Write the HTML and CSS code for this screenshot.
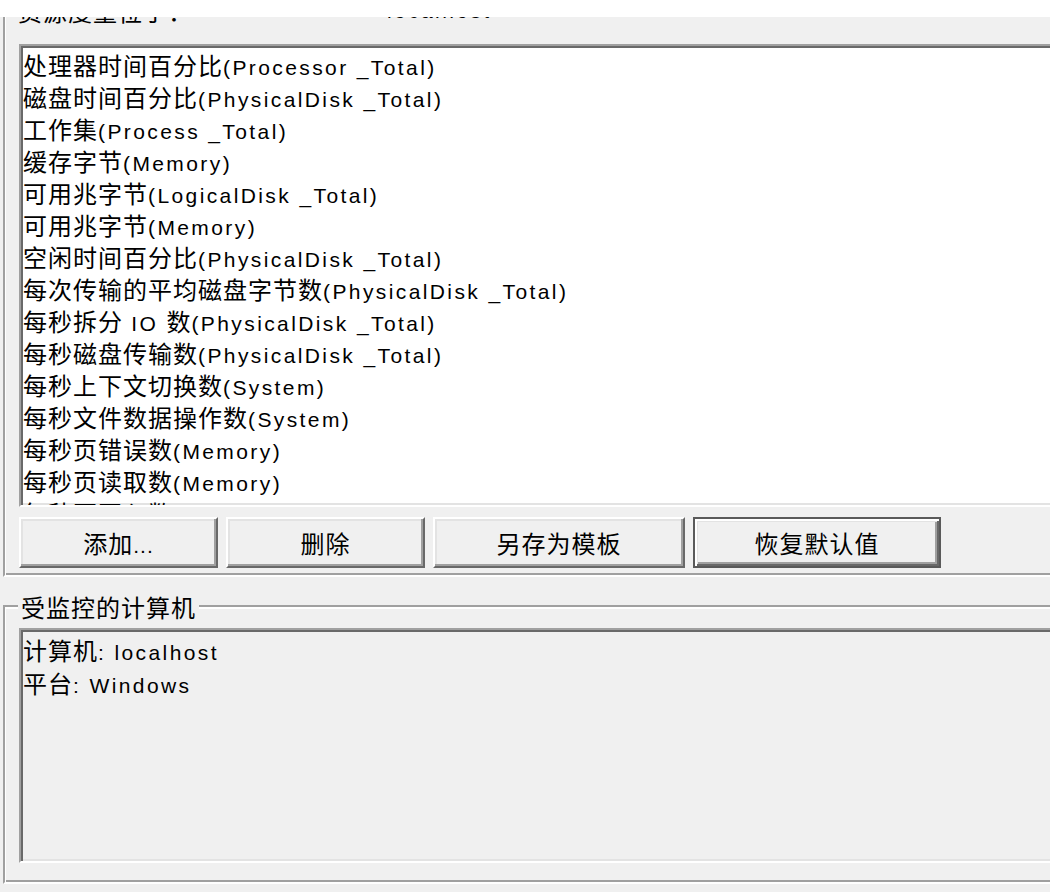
FILE: index.html
```html
<!DOCTYPE html>
<html lang="zh-CN">
<head>
<meta charset="utf-8">
<title>数据收集器属性</title>
<link rel="stylesheet" href="styles.css">
</head>
<body>
<div class="topband"></div>

<section class="group group-upper">
  <div class="src-row">
    <span class="src-label">资源度量位于：</span>
    <span class="src-value en">localhost</span>
  </div>
  <ul class="listbox">
    <li>处理器时间百分比<span class="en">(Processor _Total)</span></li>
    <li>磁盘时间百分比<span class="en">(PhysicalDisk _Total)</span></li>
    <li>工作集<span class="en">(Process _Total)</span></li>
    <li>缓存字节<span class="en">(Memory)</span></li>
    <li>可用兆字节<span class="en">(LogicalDisk _Total)</span></li>
    <li>可用兆字节<span class="en">(Memory)</span></li>
    <li>空闲时间百分比<span class="en">(PhysicalDisk _Total)</span></li>
    <li>每次传输的平均磁盘字节数<span class="en">(PhysicalDisk _Total)</span></li>
    <li>每秒拆分<span class="en"> IO </span>数<span class="en">(PhysicalDisk _Total)</span></li>
    <li>每秒磁盘传输数<span class="en">(PhysicalDisk _Total)</span></li>
    <li>每秒上下文切换数<span class="en">(System)</span></li>
    <li>每秒文件数据操作数<span class="en">(System)</span></li>
    <li>每秒页错误数<span class="en">(Memory)</span></li>
    <li>每秒页读取数<span class="en">(Memory)</span></li>
    <li>每秒页写入数<span class="en">(Memory)</span></li>
  </ul>
  <div class="buttons">
    <button class="btn btn-add">添加<span class="en">...</span></button>
    <button class="btn btn-del">删除</button>
    <button class="btn btn-save">另存为模板</button>
    <button class="btn btn-reset btn-default">恢复默认值</button>
  </div>
</section>

<section class="group group-lower">
  <div class="legend">受监控的计算机</div>
  <div class="infobox">
    <div class="info-line">计算机<span class="en">: localhost</span></div>
    <div class="info-line">平台<span class="en">: Windows</span></div>
  </div>
</section>
</body>
</html>
```
FILE: styles.css
```css
html, body {
  margin: 0;
  padding: 0;
}

body {
  width: 1050px;
  height: 892px;
  overflow: hidden;
  background: #f0f0f0;
  color: #000;
  font-family: "Noto Sans CJK SC", "Liberation Sans", sans-serif;
  font-size: 24px;
  letter-spacing: 1px;
}

.en {
  font-family: "Liberation Sans", "Noto Sans CJK SC", sans-serif;
  font-size: 21px;
  letter-spacing: 2.4px;
}

.topband {
  height: 17px;
  background: #fff;
}

.group {
  margin-left: 3px;
  border-left: 2px solid #a0a0a0;
  border-bottom: 2px solid #fff;
}

.group-upper {
  position: relative;
  overflow: hidden;
  padding: 0 0 7px 14px;
  box-shadow: inset 1px 0 0 #fff, inset 0 -2px 0 #a0a0a0;
}

.src-row {
  display: flex;
  height: 22px;
  line-height: 18px;
  margin-top: -15px;
  margin-left: -1px;
  white-space: nowrap;
}

.src-label {
  width: 369px;
}

.listbox {
  list-style: none;
  margin: 20px -40px 0 0;
  padding: 3px 0 0 2px;
  height: 463px;
  box-sizing: border-box;
  overflow: hidden;
  background: #fff;
  border: 2px solid;
  border-color: #a0a0a0 #fff #fff #a0a0a0;
  box-shadow: inset 2px 2px 0 #696969, inset -2px -2px 0 #e3e3e3;
}

.listbox li {
  height: 32px;
  line-height: 31px;
  white-space: nowrap;
}

.buttons {
  display: flex;
  gap: 8px;
  margin-top: 10px;
}

.btn {
  height: 51px;
  box-sizing: border-box;
  margin: 0;
  padding: 0;
  background: #f0f0f0;
  color: #000;
  font-family: "Noto Sans CJK SC", "Liberation Sans", sans-serif;
  font-size: 24px;
  letter-spacing: 1px;
  border: 2px solid;
  border-color: #fff #696969 #696969 #fff;
  box-shadow: inset -2px -2px 0 #a0a0a0, inset 2px 2px 0 #e3e3e3;
}

.btn .en {
  letter-spacing: 1px;
}

.btn-add, .btn-del { width: 199px; }
.btn-save { width: 252px; }
.btn-reset { width: 248px; }

.btn-default {
  border: 2px solid #5a5a5a;
  box-shadow: inset 2px 2px 0 #fff, inset -2px -2px 0 #696969,
              inset 3px 3px 0 #e3e3e3, inset -4px -4px 0 #a0a0a0;
}

.group-lower {
  margin-top: 28px;
  border-top: 2px solid #a0a0a0;
  padding: 0 0 19px 0;
  box-shadow: inset 1px 2px 0 #fff, inset 0 -2px 0 #a0a0a0;
}

.legend {
  width: fit-content;
  margin: -14px 0 0 13px;
  padding: 0 3px;
  height: 28px;
  line-height: 28px;
  background: #f0f0f0;
}

.infobox {
  margin: 7px -40px 0 14px;
  height: 235px;
  box-sizing: border-box;
  padding: 4px 0 0 2px;
  background: #f0f0f0;
  border: 2px solid;
  border-color: #a0a0a0 #fff #fff #a0a0a0;
  box-shadow: inset 2px 2px 0 #696969, inset -2px -2px 0 #e3e3e3;
}

.info-line {
  height: 33px;
  line-height: 32px;
  white-space: nowrap;
}
```
